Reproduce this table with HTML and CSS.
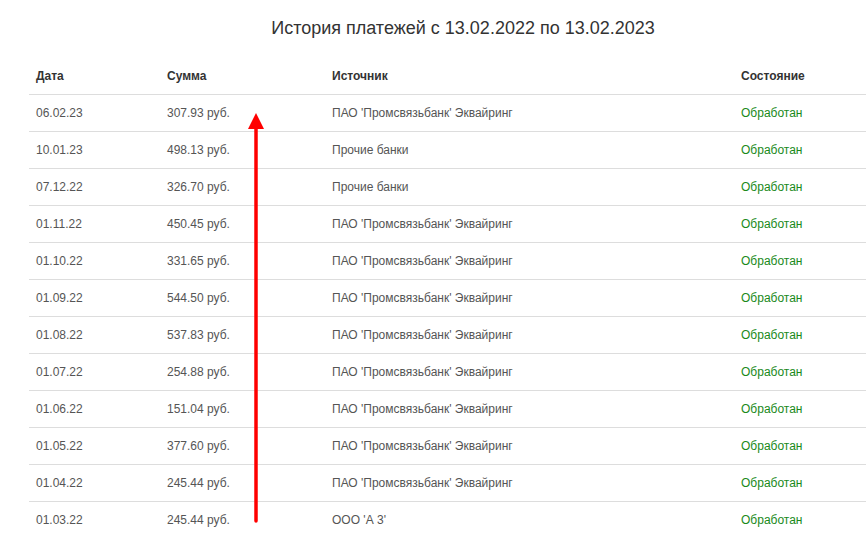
FILE: index.html
```html
<!DOCTYPE html>
<html lang="ru">
<head>
<meta charset="utf-8">
<link rel="stylesheet" href="styles.css">
</head>
<body>
<div class="page">
  <h1 class="title">История платежей с 13.02.2022 по 13.02.2023</h1>
  <table class="payments">
    <thead>
      <tr><th class="c-date">Дата</th><th class="c-sum">Сумма</th><th class="c-src">Источник</th><th class="c-state">Состояние</th></tr>
    </thead>
    <tbody>
      <tr><td>06.02.23</td><td>307.93 руб.</td><td>ПАО 'Промсвязьбанк' Эквайринг</td><td class="ok">Обработан</td></tr>
      <tr><td>10.01.23</td><td>498.13 руб.</td><td>Прочие банки</td><td class="ok">Обработан</td></tr>
      <tr><td>07.12.22</td><td>326.70 руб.</td><td>Прочие банки</td><td class="ok">Обработан</td></tr>
      <tr><td>01.11.22</td><td>450.45 руб.</td><td>ПАО 'Промсвязьбанк' Эквайринг</td><td class="ok">Обработан</td></tr>
      <tr><td>01.10.22</td><td>331.65 руб.</td><td>ПАО 'Промсвязьбанк' Эквайринг</td><td class="ok">Обработан</td></tr>
      <tr><td>01.09.22</td><td>544.50 руб.</td><td>ПАО 'Промсвязьбанк' Эквайринг</td><td class="ok">Обработан</td></tr>
      <tr><td>01.08.22</td><td>537.83 руб.</td><td>ПАО 'Промсвязьбанк' Эквайринг</td><td class="ok">Обработан</td></tr>
      <tr><td>01.07.22</td><td>254.88 руб.</td><td>ПАО 'Промсвязьбанк' Эквайринг</td><td class="ok">Обработан</td></tr>
      <tr><td>01.06.22</td><td>151.04 руб.</td><td>ПАО 'Промсвязьбанк' Эквайринг</td><td class="ok">Обработан</td></tr>
      <tr><td>01.05.22</td><td>377.60 руб.</td><td>ПАО 'Промсвязьбанк' Эквайринг</td><td class="ok">Обработан</td></tr>
      <tr><td>01.04.22</td><td>245.44 руб.</td><td>ПАО 'Промсвязьбанк' Эквайринг</td><td class="ok">Обработан</td></tr>
      <tr><td>01.03.22</td><td>245.44 руб.</td><td>ООО 'А 3'</td><td class="ok">Обработан</td></tr>
    </tbody>
  </table>
  <svg class="arrow" width="20" height="412" viewBox="0 0 20 412">
    <polygon points="10,0 2,16 18,16" fill="#ff0000"/>
    <line x1="10" y1="14" x2="10" y2="408" stroke="#ff0000" stroke-width="3.5" stroke-linecap="round"/>
  </svg>
</div>
</body>
</html>
```
FILE: styles.css
```css
html, body {
  margin: 0;
  padding: 0;
  background: #fff;
  overflow: hidden;
}
body {
  font-family: "Liberation Sans", Arial, sans-serif;
}
.page {
  position: relative;
  width: 868px;
  margin-left: 29px;
  padding-top: 16px;
}
.title {
  margin: 0 0 19px;
  font-size: 18px;
  font-weight: normal;
  line-height: 24px;
  color: #333;
  text-align: center;
}
.payments {
  width: 868px;
  border-collapse: collapse;
  font-size: 12px;
  table-layout: fixed;
}
.payments th {
  text-align: left;
  font-weight: bold;
  color: #333;
  padding: 9px 7px 9px;
  line-height: 17px;
  border-bottom: 1px solid #dddddd;
  height: 17px;
}
.payments td {
  padding: 0 7px;
  height: 36px;
  line-height: 17px;
  color: #555;
  border-top: 1px solid #dddddd;
  vertical-align: middle;
}
.payments tbody tr:first-child td {
  border-top: none;
}
.c-date { width: 117px; }
.c-sum { width: 151px; }
.c-src { width: 395px; }
.payments td.ok {
  color: #1a8a1a;
}
.arrow {
  position: absolute;
  left: 217px;
  top: 113px;
}
```
